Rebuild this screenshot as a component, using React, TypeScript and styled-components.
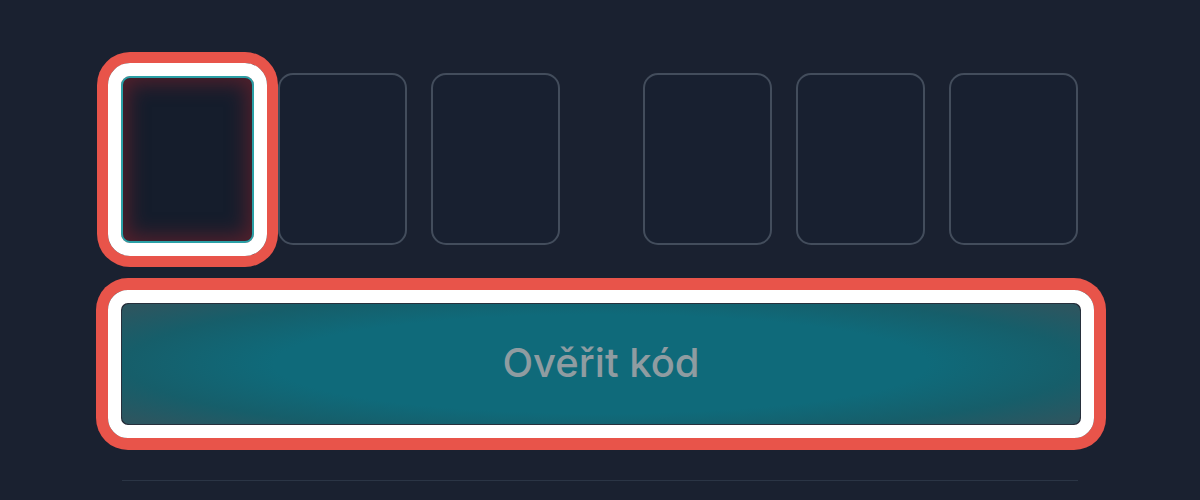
import React, { FC } from 'react';
import styled, { createGlobalStyle, css } from 'styled-components';

const GlobalStyle = createGlobalStyle`
  html, body {
    margin: 0;
    padding: 0;
    background: #1a2130;
    font-family: Inter, "Noto Sans", "Liberation Sans", sans-serif;
  }
`;

const Page = styled.div`
  width: 1200px;
  height: 500px;
  overflow: hidden;
  background: #1a2130;
`;

const Form = styled.div`
  width: 960px;
  margin: 0 0 0 121px;
  padding-top: 73px;
  display: flex;
  flex-direction: column;
`;

const CodeRow = styled.div`
  display: flex;
  justify-content: space-between;
  align-items: center;
  padding: 0 3px 0 0;
`;

const CodeGroup = styled.div`
  display: flex;
  align-items: center;
  gap: 24px;
`;

// annotation ring drawn over the focused field and the button
const Highlight = styled.span`
  position: absolute;
  top: -15px;
  left: -15px;
  right: -15px;
  bottom: -15px;
  border: 13px solid #ffffff;
  border-radius: 22px;
  box-shadow: 0 0 0 11px #e8544a;
  pointer-events: none;
`;

const CodeBox = styled.div<{ $active?: boolean }>`
  position: relative;
  width: 129px;
  height: 172px;
  box-sizing: border-box;
  border: 2px solid #434d5c;
  border-radius: 15px;
  background: #182030;

  ${({ $active }) =>
    $active &&
    css`
      width: 133px;
      height: 167px;
      border: 2px solid #2aa0a6;
      border-radius: 9px;
      background: #151d2c;
      box-shadow: inset 0 0 20px 5px rgba(105, 34, 44, 0.75);
    `}
`;

const ButtonWrap = styled.div`
  position: relative;
  margin-top: 58px;
`;

const VerifyButton = styled.button`
  display: block;
  width: 100%;
  height: 122px;
  border: 1px solid #27303c;
  border-radius: 8px;
  background: radial-gradient(ellipse 62% 75% at 50% 50%, #0f6a7a 55%, #165e6a 80%, #2c5660 100%);
  color: #8f9ca1;
  font-family: Inter, "Noto Sans", "Liberation Sans", sans-serif;
  font-size: 40px;
  font-weight: 500;
  padding: 0 0 4px;
  cursor: not-allowed;
`;

const ButtonHighlight = styled(Highlight)`
  top: -13px;
  left: -13px;
  right: -13px;
  bottom: -13px;
  border-width: 13px;
  border-radius: 20px;
  box-shadow: 0 0 0 12px #e8544a;
`;

const Divider = styled.hr`
  margin: 55px 3px 0 1px;
  border: none;
  border-top: 1.5px solid #2b3545;
`;

const App: FC = () => {
  const first = [0, 1, 2];
  const second = [3, 4, 5];

  return (
    <Page>
      <GlobalStyle />
      <Form>
        <CodeRow>
          <CodeGroup>
            {first.map(i => (
              <CodeBox key={i} $active={i === 0}>
                {i === 0 && <Highlight />}
              </CodeBox>
            ))}
          </CodeGroup>
          <CodeGroup>
            {second.map(i => (
              <CodeBox key={i} />
            ))}
          </CodeGroup>
        </CodeRow>
        <ButtonWrap>
          <VerifyButton type="button" disabled>
            Ověřit kód
          </VerifyButton>
          <ButtonHighlight />
        </ButtonWrap>
        <Divider />
      </Form>
    </Page>
  );
};

export default App;
